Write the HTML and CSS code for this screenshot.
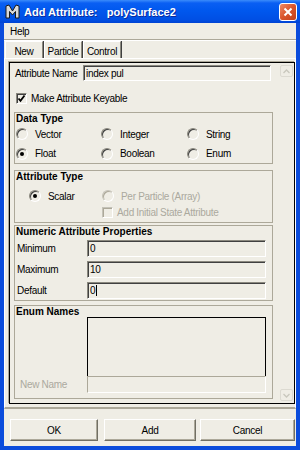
FILE: index.html
```html
<!DOCTYPE html>
<html lang="en">
<head>
    <meta charset="UTF-8">
    <meta name="viewport" content="width=device-width, initial-scale=1.0">
    <title>Add Attribute</title>
    <link rel="stylesheet" href="styles.css">
</head>
<body>
    <div class="window">
        <div class="titlebar">
            <svg class="app-icon" width="15" height="15" viewBox="0 0 15 15">
                <polygon points="1,14 1,2 4,1 7.5,7 11,1 14,2 14,14 10.5,14 10.5,7.5 7.5,11 4.5,7.5 4.5,14" fill="#d9d9d9" stroke="#1a1a1a" stroke-width="1"/>
            </svg>
            <span class="title">Add Attribute:   polySurface2</span>
            <div class="close-btn">
                <svg width="10" height="10" viewBox="0 0 10 10"><path d="M1.5 1.5 L8.5 8.5 M8.5 1.5 L1.5 8.5" stroke="#fff" stroke-width="2"/></svg>
            </div>
        </div>

        <div class="frame">
            <div class="menubar"><span>Help</span></div>

            <div class="tabs">
                <div class="tab active">New</div>
                <div class="tab">Particle</div>
                <div class="tab">Control</div>
            </div>

            <div class="tab-panel">
                <div class="scroll-pane">
                    <div class="form">
                        <div class="attr-row">
                            <span class="attr-label">Attribute Name</span>
                            <div class="field attr-field">index pul</div>
                        </div>

                        <div class="keyable">
                            <span class="checkbox">
                                <svg width="9" height="9" viewBox="0 0 9 9"><path d="M1.5 4.5 L3.5 6.8 L7.5 1.5" fill="none" stroke="#000" stroke-width="1.8"/></svg>
                            </span>
                            <span>Make Attribute Keyable</span>
                        </div>

                        <!-- Data Type -->
                        <div class="group data-type">
                            <div class="group-title">Data Type</div>
                            <div class="type-grid">
                                <div class="choice"><span class="radio"></span>Vector</div>
                                <div class="choice"><span class="radio"></span>Integer</div>
                                <div class="choice"><span class="radio"></span>String</div>
                                <div class="choice"><span class="radio checked"></span>Float</div>
                                <div class="choice"><span class="radio"></span>Boolean</div>
                                <div class="choice"><span class="radio"></span>Enum</div>
                            </div>
                        </div>

                        <!-- Attribute Type -->
                        <div class="group attr-type">
                            <div class="group-title">Attribute Type</div>
                            <div class="attr-type-grid">
                                <div class="choice"><span class="radio checked"></span>Scalar</div>
                                <div class="choice disabled"><span class="radio"></span>Per Particle (Array)</div>
                                <div></div>
                                <div class="choice disabled"><span class="checkbox"></span>Add Initial State Attribute</div>
                            </div>
                        </div>

                        <!-- Numeric -->
                        <div class="group numeric">
                            <div class="group-title">Numeric Attribute Properties</div>
                            <div class="num-row">
                                <span class="num-label">Minimum</span>
                                <div class="field num-field">0</div>
                            </div>
                            <div class="num-row">
                                <span class="num-label">Maximum</span>
                                <div class="field num-field">10</div>
                            </div>
                            <div class="num-row">
                                <span class="num-label">Default</span>
                                <div class="field num-field">0<span class="caret"></span></div>
                            </div>
                        </div>

                        <!-- Enum -->
                        <div class="group enum">
                            <div class="group-title">Enum Names</div>
                            <div class="enum-list"></div>
                            <div class="new-name-row">
                                <span class="new-name-label">New Name</span>
                                <div class="field disabled-field"></div>
                            </div>
                        </div>
                    </div>

                    <div class="scrollbar">
                        <div class="scroll-arrow">
                            <svg width="7" height="5" viewBox="0 0 7 5"><path d="M0.5 4 L3.5 1 L6.5 4" fill="none" stroke="#c9c7bd" stroke-width="1.3"/></svg>
                        </div>
                        <div class="scroll-arrow">
                            <svg width="7" height="5" viewBox="0 0 7 5"><path d="M0.5 1 L3.5 4 L6.5 1" fill="none" stroke="#c9c7bd" stroke-width="1.3"/></svg>
                        </div>
                    </div>
                </div>
            </div>

            <div class="buttons">
                <div class="button btn-ok">OK</div>
                <div class="button btn-add">Add</div>
                <div class="button btn-cancel">Cancel</div>
            </div>
        </div>
    </div>
</body>
</html>
```

FILE: styles.css
```css
/* Maya "Add Attribute" dialog, XP Luna frame */
body {
    margin: 0;
    font-family: "Liberation Sans", Arial, sans-serif;
    font-size: 10px;
    letter-spacing: -0.3px;
    color: #000;
}

.window {
    width: 300px;
    height: 450px;
    display: flex;
    flex-direction: column;
}

.titlebar {
    height: 23px;
    flex: none;
    display: flex;
    align-items: center;
    padding-left: 5px;
    background: linear-gradient(#3b8cfb 0, #0a5ff3 3px, #0058ee 45%, #004fe4 85%, #0043d3 100%);
}

.app-icon {
    margin-right: 4px;
}

.title {
    color: #fff;
    font-size: 11px;
    font-weight: bold;
    letter-spacing: 0;
    white-space: pre;
    text-shadow: 1px 1px #0b2b9e;
}

.close-btn {
    margin-left: auto;
    margin-right: 3px;
    width: 16px;
    height: 16px;
    border: 1px solid #fff;
    border-radius: 3px;
    background: linear-gradient(135deg, #ef8a67, #d9552c 50%, #c2401c);
    display: flex;
    justify-content: center;
    align-items: center;
}

.frame {
    flex: 1;
    display: flex;
    flex-direction: column;
    background-color: #efede5;
    border: solid #0b4cdc;
    border-width: 0 4px 4px;
}

.menubar {
    height: 14px;
    padding: 2px 0 0 6px;
    line-height: 14px;
    border-bottom: 1px solid #aca899;
    box-shadow: 0 1px #fff;
}

.tabs {
    display: flex;
    height: 17px;
    margin-top: 1px;
    padding-left: 1px;
}

.tab {
    width: 36px;
    height: 14px;
    padding-top: 2px;
    line-height: 15px;
    text-align: center;
    border-left: 1px solid #fff;
    border-top: 1px solid #fff;
    border-right: 1px solid #8a887e;
    box-shadow: 1px 0 #404040;
    margin-right: 1px;
}

.tab-panel {
    height: 351px;
    box-sizing: border-box;
    border-top: 1px solid #fff;
    border-left: 1px solid #fff;
    border-right: 1px solid #fff;
    border-bottom: 2px solid #aca899;
    padding: 3px 0 3px 4px;
}

.scroll-pane {
    height: 100%;
    box-sizing: border-box;
    border: 1px solid #000;
    box-shadow: -1px -1px 0 #aca899;
    display: flex;
}

.form {
    flex: 1;
    padding-top: 2px;
}

.scrollbar {
    width: 13px;
    padding: 2px 1px 2px 2px;
    display: flex;
    flex-direction: column;
    justify-content: space-between;
}

.scroll-arrow {
    height: 12px;
    border: 1px solid #dcdad1;
    border-radius: 2px;
    box-sizing: border-box;
    display: flex;
    justify-content: center;
    align-items: center;
}

/* inputs */
.field {
    height: 17px;
    box-sizing: border-box;
    border-top: 1px solid #8a887e;
    border-left: 1px solid #8a887e;
    border-right: 1px solid #fff;
    border-bottom: 1px solid #fff;
    box-shadow: inset 1px 1px #404040;
    padding: 2px 0 0 2px;
    line-height: 12px;
}

.attr-row {
    display: flex;
    align-items: center;
    height: 16px;
    padding-left: 5px;
}

.attr-label {
    width: 68px;
}

.attr-field {
    width: 188px;
    height: 16px;
}

.keyable {
    display: flex;
    align-items: center;
    margin: 12px 0 0 6px;
    height: 11px;
}

.checkbox {
    width: 11px;
    height: 11px;
    flex: none;
    box-sizing: border-box;
    border: 1px solid;
    border-color: #8a887e #fff #fff #8a887e;
    box-shadow: inset 1px 1px #404040;
    display: flex;
    justify-content: center;
    align-items: center;
    margin-right: 4px;
}

.radio {
    width: 12px;
    height: 12px;
    flex: none;
    box-sizing: border-box;
    border-radius: 50%;
    border: 1px solid;
    border-color: #8a887e #fff #fff #8a887e;
    box-shadow: inset 1px 1px #404040;
    margin-right: 7px;
    position: relative;
}

.radio.checked::after {
    content: "";
    position: absolute;
    left: 3px;
    top: 3px;
    width: 4px;
    height: 4px;
    border-radius: 50%;
    background-color: #000;
}

.choice {
    display: flex;
    align-items: center;
}

.disabled {
    color: #aba99e;
}

.disabled .radio,
.disabled .checkbox {
    border-color: #c4c2b8 #fff #fff #c4c2b8;
    box-shadow: inset 1px 1px #aca899;
}

/* group frames */
.group {
    margin: 0 5px 0 4px;
    border: 1px solid #aca899;
}

.group-title {
    height: 11px;
    line-height: 11px;
    padding-left: 1px;
    font-weight: bold;
    letter-spacing: 0;
}

.data-type {
    margin-top: 8px;
}

.type-grid {
    display: grid;
    grid-template-columns: 85px 86px 1fr;
    grid-template-rows: 20px 19px;
    padding-left: 1px;
}

.attr-type {
    margin-top: 6px;
    padding-bottom: 3px;
}

.attr-type-grid {
    display: grid;
    grid-template-columns: 73px 1fr;
    grid-template-rows: 14px 14px;
    row-gap: 2px;
    padding: 7px 0 0 14px;
}

.numeric {
    margin-top: 2px;
    padding-bottom: 1px;
}

.numeric .group-title {
    margin-bottom: 3px;
}

.num-row {
    display: flex;
    align-items: center;
    padding-left: 2px;
    margin-bottom: 4px;
}

.num-row:last-child {
    margin-bottom: 0;
}

.num-label {
    width: 70px;
}

.num-field {
    width: 179px;
}

.caret {
    display: inline-block;
    width: 1px;
    height: 11px;
    margin-left: 1px;
    vertical-align: -2px;
    background-color: #000;
}

.enum {
    margin-top: 4px;
    padding-bottom: 5px;
}

.enum-list {
    margin-left: 72px;
    width: 179px;
    height: 59px;
    box-sizing: border-box;
    border: 1px solid #000;
    border-bottom: none;
}

.new-name-row {
    display: flex;
    align-items: center;
    padding-left: 5px;
}

.new-name-label {
    width: 67px;
    color: #aba99e;
}

.disabled-field {
    width: 179px;
    border-color: #aca899 #fff #fff #aca899;
    box-shadow: none;
}

/* bottom buttons */
.buttons {
    flex: 1;
    display: flex;
    align-items: flex-start;
    padding: 10px 0 0 6px;
}

.button {
    height: 22px;
    box-sizing: border-box;
    border: 1px solid;
    border-color: #fff #716f64 #716f64 #fff;
    box-shadow: inset -1px -1px #aca899;
    display: flex;
    justify-content: center;
    align-items: center;
}

.btn-ok {
    width: 88px;
    margin-right: 6px;
}

.btn-add {
    width: 92px;
    margin-right: 4px;
}

.btn-cancel {
    width: 95px;
}
```
